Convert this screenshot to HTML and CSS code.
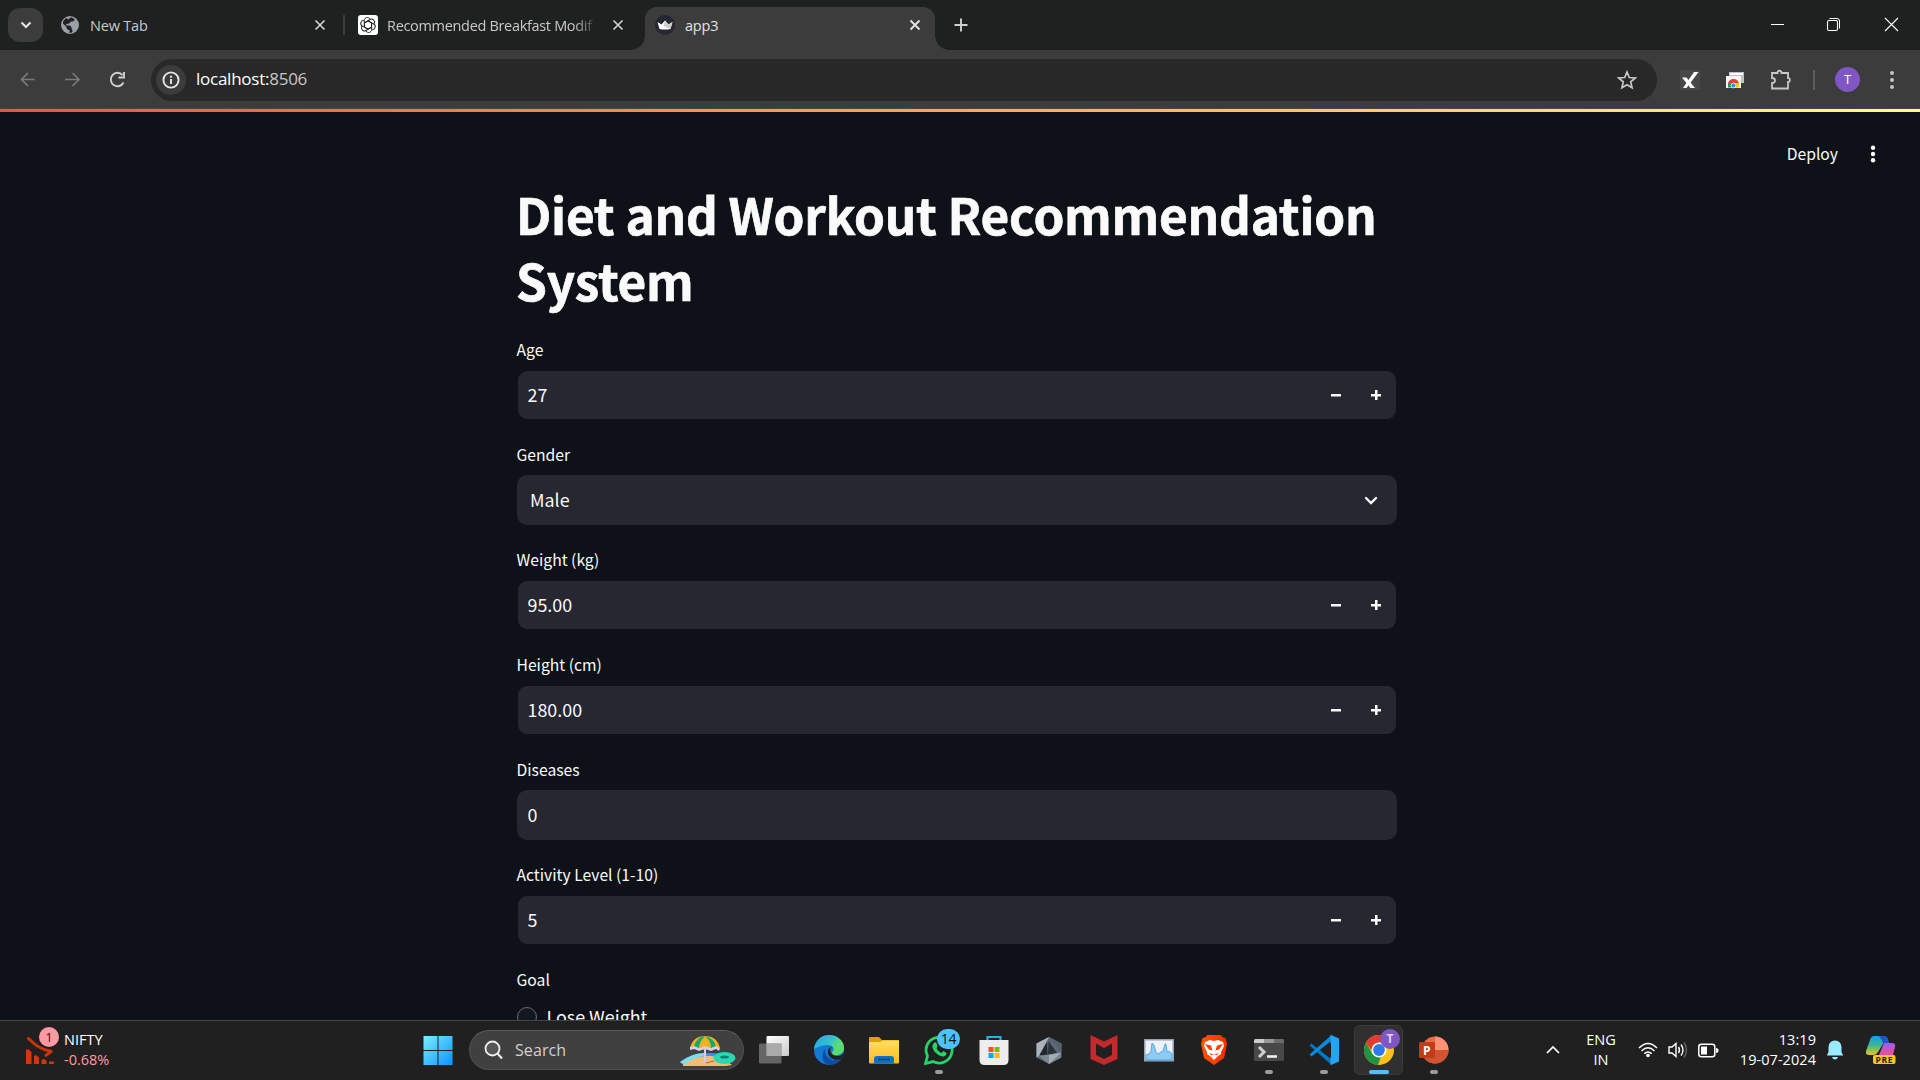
FILE: index.html
```html
<!DOCTYPE html>
<html lang="en">
<head>
<meta charset="utf-8">
<title>app3</title>
<link rel="stylesheet" href="styles.css">
</head>
<body>
<div class="screen">
  <header class="tabstrip">
    <span class="tab-search"><svg width="12" height="8" viewBox="0 0 12 8"><path d="M1.500 1.500 6 6l4.500-4.500" fill="none" stroke="#e8e8e8" stroke-width="2"/></svg></span>
    <div class="tab tab-first">
      <svg width="20" height="20" viewBox="0 0 20 20"><circle cx="10" cy="10" r="9" fill="#9aa0a6"/><path d="M10 2.500c2 0 3.500.5 4.500 2 0 1.500-1.500 2-3 2s-1 1.500-2.500 2-2.500 0-3 1 1.500 1 3 1 2.500 1 2.500 2.500 1 1.500 1 3-1.500 2-3 2v-3c-1.500 0-3-1-3-2.500s-2-2-3.500-4C3 5 5.500 3.500 7 3c0 2 3 1.500 3-.5z" fill="#202124"/></svg>
      <span class="tab-title">New Tab</span>
      <svg class="close" width="20" height="20" viewBox="0 0 20 20"><path d="m5.500 5.500 9 9m0-9-9 9" stroke="#d0d0d0" stroke-width="1.700"/></svg>
    </div>
    <span class="tab-divider"></span>
    <div class="tab tab-second">
      <svg width="20" height="20" viewBox="0 0 20 20"><rect width="20" height="20" rx="3" fill="#fff"/><g fill="none" stroke="#222" stroke-width="1"><g id="petal"><path d="M10 5.800 13.600 8v4.300"/><path d="M6.300 7.800V5.500c0-3.200 4.200-4 5.700-1.500"/></g><use href="#petal" transform="rotate(60 10 10)"/><use href="#petal" transform="rotate(120 10 10)"/><use href="#petal" transform="rotate(180 10 10)"/><use href="#petal" transform="rotate(240 10 10)"/><use href="#petal" transform="rotate(300 10 10)"/></g></svg>
      <span class="tab-title faded">Recommended Breakfast Modif</span>
      <svg class="close" width="20" height="20" viewBox="0 0 20 20"><path d="m5.500 5.500 9 9m0-9-9 9" stroke="#d0d0d0" stroke-width="1.700"/></svg>
    </div>
    <div class="tab tab-active">
      <svg width="20" height="20" viewBox="0 0 20 20"><circle cx="10" cy="10" r="10" fill="#262730"/><path d="m2.500 7 4 2.500L10 5.500l3.500 4 4-2.500-2 7q-5.500 1-11 0z" fill="#fff"/><path d="m10 5.500 3.500 4 4-2.500-2 7-7-3z" fill="#ccc"/></svg>
      <span class="tab-title">app3</span>
      <svg class="close" width="20" height="20" viewBox="0 0 20 20"><path d="m5.500 5.500 9 9m0-9-9 9" stroke="#e3e3e3" stroke-width="1.900"/></svg>
    </div>
    <svg class="newtab-plus" width="14" height="14" viewBox="0 0 14 14"><path d="M7 .5v13M.5 7h13" stroke="#d0d0d0" stroke-width="1.900"/></svg>
    <div class="window-buttons">
      <svg width="57" height="20" viewBox="0 0 57 20"><path d="M22 9.500h13" stroke="#fff"/></svg>
      <svg width="57" height="20" viewBox="0 0 57 20"><rect x="21.500" y="5.500" width="10" height="10" rx="1.500" fill="none" stroke="#fff" stroke-width="1.100"/><path d="M23.500 3.500H31q2.500 0 2.500 2.500v7.500" fill="none" stroke="#fff"/></svg>
      <svg width="57" height="20" viewBox="0 0 57 20"><path d="m22 3 13 13m0-13L22 16" stroke="#fff" stroke-width="1.100"/></svg>
    </div>
  </header>

  <div class="toolbar">
    <svg class="nav" width="44" height="20" viewBox="0 0 44 20"><path d="M28.500 9.500h-13m6.500-6.500-6.500 6.500L22 16" fill="none" stroke="#7a7a7a" stroke-width="1.700"/></svg>
    <svg class="nav" width="45" height="20" viewBox="0 0 45 20"><path d="M15 9.500h14M22.500 3 29 9.500 22.500 16" fill="none" stroke="#7a7a7a" stroke-width="1.700"/></svg>
    <svg class="nav reload" width="45" height="20" viewBox="0 0 45 20"><path d="M28.500 12.500A6.700 6.700 0 1 1 27.500 5m1.500-3v5.500h-5.500" fill="none" stroke="#d0d0d0" stroke-width="1.900"/></svg>
    <div class="omnibox">
      <span class="info"><svg width="18" height="18" viewBox="0 0 18 18"><circle cx="9" cy="9" r="7.600" fill="none" stroke="#e8e8e8" stroke-width="1.900"/><path d="M9 8v5M9 4.700v2" stroke="#e8e8e8" stroke-width="1.900"/></svg></span>
      <span class="url">localhost:<span class="port">8506</span></span>
      <svg class="star" width="20" height="20" viewBox="0 0 20 20"><path d="m10 2 2.300 5.500 6 .5-4.600 3.900 1.400 5.900L10 14.700l-5.100 3.100 1.400-5.900L1.700 8l6-.5z" fill="none" stroke="#c7c7c7" stroke-width="1.700"/></svg>
    </div>
    <div class="extensions">
      <svg width="20" height="20" viewBox="0 0 20 20"><rect width="20" height="20" fill="#484848"/><path d="M2 7.500h4.500L15 18h-4.500z" fill="#fff"/><path d="M3 18 14 2h4.500L6.500 18z" fill="#fff"/></svg>
      <svg class="ext-store" width="20" height="20" viewBox="0 0 20 20"><path d="M4 2h15v11H4z" fill="#bfc1c4"/><path d="M5 3h13v2H5z" fill="#fff"/><path d="M1 6h15v12H1z" fill="#f4f4f4"/><path d="M3 14a5.500 5 0 0 1 11 0l-2 2H6z" fill="#db4437"/><path d="M3 17.500V14l2.500-1 3 4.500z" fill="#0f9d58"/><path d="m9 17.500 1-4.500h4v4.500z" fill="#f4c20d"/><circle cx="8.500" cy="15.500" r="2.400" fill="#4285f4" stroke="#fff" stroke-width=".7"/></svg>
      <svg class="ext-puzzle" width="22" height="22" viewBox="0 0 22 22"><path d="M2 4h5.500c-.5-3 4.500-3 4 0H18v5c2.500-.5 2.500 4.500 0 4v6.500H2V14c4 0 4-5 0-5z" fill="none" stroke="#c7c7c7" stroke-width="1.800"/></svg>
      <span class="ext-divider"></span>
      <span class="avatar">T</span>
      <svg class="ext-menu" width="6" height="20" viewBox="0 0 6 20" fill="#c7c7c7"><circle cx="3" cy="3" r="2"/><circle cx="3" cy="10" r="2"/><circle cx="3" cy="17" r="2"/></svg>
    </div>
  </div>

  <div class="decoration"></div>
  <main class="app">
    <div class="app-header">
      <span class="deploy">Deploy</span>
      <svg width="6" height="18" viewBox="0 0 6 18" fill="#fafafa"><circle cx="3" cy="2.700" r="2.200"/><circle cx="3" cy="9" r="2.200"/><circle cx="3" cy="15.300" r="2.200"/></svg>
    </div>
    <div class="column">
      <h1 class="title">Diet and Workout Recommendation System</h1>
      <section class="field"><label class="label">Age</label>
        <div class="box number"><span class="value">27</span><i class="minus"></i><i class="plus"></i></div></section>
      <section class="field"><label class="label">Gender</label>
        <div class="box select"><span class="value">Male</span><svg width="14" height="9" viewBox="0 0 14 9"><path d="m2 2 5 5 5-5" fill="none" stroke="#fafafa" stroke-width="2.400" stroke-linecap="round"/></svg></div></section>
      <section class="field"><label class="label">Weight (kg)</label>
        <div class="box number"><span class="value">95.00</span><i class="minus"></i><i class="plus"></i></div></section>
      <section class="field"><label class="label">Height (cm)</label>
        <div class="box number"><span class="value">180.00</span><i class="minus"></i><i class="plus"></i></div></section>
      <section class="field"><label class="label">Diseases</label>
        <div class="box"><span class="value">0</span></div></section>
      <section class="field"><label class="label">Activity Level (1-10)</label>
        <div class="box number"><span class="value">5</span><i class="minus"></i><i class="plus"></i></div></section>
      <section class="field"><label class="label">Goal</label>
        <div class="radio"><span class="dot"></span><span class="radio-text">Lose Weight</span></div></section>
    </div>
  </main>

  <footer class="taskbar">
    <div class="widget">
      <div class="widget-icon">
        <svg width="30" height="30" viewBox="0 0 30 30"><path d="M1.500 2.500C8 9 13 14 26 16.500M26 16l-7 5" fill="none" stroke="#cb3406" stroke-width="3"/><path d="M0 29V15l2-1 3.500 3v12zM8 29v-8l2-1 3 2.500V29zM15.500 29v-4l2-1 3 1.500V29zM23 29v-2.500h5V29z" fill="#cf380d"/></svg>
        <span class="badge pink">1</span>
      </div>
      <div class="widget-text"><span>NIFTY</span><span class="down">-0.68%</span></div>
    </div>
    <div class="apps">
      <span class="task"><svg width="30" height="30" viewBox="0 0 30 30"><defs><linearGradient id="win" x1="0" y1="0" x2="30" y2="30" gradientUnits="userSpaceOnUse"><stop stop-color="#7df0ff"/><stop offset="1" stop-color="#0a92ff"/></linearGradient></defs><path d="M.5 1h14v14H.5zM15.500 1h14v14h-14zM.5 16h14v14H.5zM15.500 16h14v14h-14z" fill="url(#win)"/></svg></span>
      <div class="search">
        <svg width="20" height="20" viewBox="0 0 20 20"><circle cx="8.500" cy="8.500" r="7" fill="#565656" stroke="#eee" stroke-width="1.800"/><path d="m13.500 13.500 4.500 5" stroke="#eee" stroke-width="2"/></svg>
        <span class="search-text">Search</span>
        <svg class="beach" width="56" height="34" viewBox="0 0 56 34"><path d="M0 29Q12 20 30 20l16 1-10 3Q18 23 4 32z" fill="#3b93e8"/><path d="M3 31Q15 22 30 23q12 0 22 9L46 33H3z" fill="#f0bd78"/><path d="M0 29Q12 20 24 20l2 2Q14 24 4 32z" fill="#7fdcf0"/><path d="M25 3v26" stroke="#d8c8e8" stroke-width="2.200"/><path d="M10 15Q13 3 25 3q12 0 15 12l-4-1-5 1-6-1-6 1-5-1z" fill="#f2b01e"/><path d="M14 14Q16 4 25 3q-6 6-6 12zM31 15Q31 8 25 3q9 2 11 11z" fill="#10a96c"/><path d="m10 14 4-1 5 2 6-2 6 2 5-2 4 2-1 3-3-2-5 2-6-2-6 2-5-2-4 1z" fill="#d9cdeb"/><ellipse cx="44.500" cy="25" rx="11" ry="6" fill="#27d8b0"/><ellipse cx="44.500" cy="24" rx="4.500" ry="1.600" fill="#167f73"/><path d="M26 30 34 28" stroke="#a36b3b"/></svg>
      </div>
      <span class="task"><svg width="30" height="30" viewBox="0 0 30 30"><defs><linearGradient id="tv" x1="0" y1="0" x2="1" y2="1"><stop stop-color="#fff"/><stop offset="1" stop-color="#ccc"/></linearGradient></defs><rect x="7.500" y="1" width="22.500" height="20" rx="1" fill="url(#tv)"/><rect y="8.500" width="22.500" height="20" rx="1" fill="#777" fill-opacity=".8"/><path d="M7.500 8.500h15V21h-15z" fill="#aaa"/></svg></span>
      <span class="task"><svg width="30" height="30" viewBox="0 0 30 30"><defs><linearGradient id="ed" x1="0" y1="0" x2="1" y2=".5"><stop stop-color="#20a4e8"/><stop offset=".55" stop-color="#35c1d0"/><stop offset="1" stop-color="#6fe94a"/></linearGradient></defs><circle cx="15" cy="15" r="15" fill="#1279d4"/><path d="M0 14C1 6 7 0 15 0c9 0 15 6 15 13 0 4-3 7-7 7-5 0-6-2-4-4 2-3-1-6-5-6-6 0-10 2-14 4z" fill="url(#ed)"/><path d="M15 11c-6 2-5 11 3 14 4 1 7-.5 10-2-3 5-8 7-13 7C7 29 6 15 15 11z" fill="#0c4ea2"/><path d="M18 12c-4 2-1 9 5 9 3 0 5-1 7-4-1 4-2 5-3 7-5 2-12 0-13-6-.4-3 1-6 4-6z" fill="#202020"/><path d="M19.500 12c2 3-1 4 0 6 3 3 9 1 10-3V9z" fill="#57dc73"/></svg></span>
      <span class="task"><svg width="30" height="30" viewBox="0 0 30 30"><defs><linearGradient id="fo" x1="0" y1="0" x2="0" y2="1"><stop stop-color="#ffdf62"/><stop offset="1" stop-color="#ffb91e"/></linearGradient></defs><path d="M0 9V3q0-1 1-1h9l3 3h16q1 0 1 1v3z" fill="#dda008"/><path d="M0 7h11l3-1.500h16V27q0 1.500-1 1.500H1Q0 28.500 0 27z" fill="url(#fo)"/><path d="M5 28.500V24q0-3 3-3h14q3 0 3 3v4.500z" fill="#0b72c5"/><path d="M9 24.500h12" stroke="#08406f" stroke-width="1.500"/></svg></span>
      <span class="task"><svg width="30" height="30" viewBox="0 0 30 30"><path d="m1.500 28.500 2-7.500A13 13 0 1 1 9 26.600z" fill="none" stroke="#25d366" stroke-width="2.800"/><path d="M10 8c1-1 2-1 2.500 0l1 3c.3.800-1 2-1 2 1 2.500 3 4 5 5l1.500-1.500c.5-.6 3 1 3.500 1.500.5 1-1 3-3 3.500-3 .5-10-4-11-9C8 10.500 9 9 10 8z" fill="#25d366"/></svg><span class="badge blue">14</span><i class="running"></i></span>
      <span class="task"><svg width="30" height="30" viewBox="0 0 30 30"><path d="M8.500 7V2h13v5" fill="none" stroke="#23b4f0" stroke-width="2.200"/><path d="M.5 5h29v20q0 5-5 5h-19q-5 0-5-5z" fill="#ededed"/><path d="M9.500 12h5v5h-5z" fill="#f25022"/><path d="M15.500 12h5v5h-5z" fill="#7fba00"/><path d="M9.500 18h5v5h-5z" fill="#00a4ef"/><path d="M15.500 18h5v5h-5z" fill="#ffb900"/></svg></span>
      <span class="task"><svg width="28" height="30" viewBox="0 0 28 30"><path d="m14 2 12.500 6.500v14L14 29 1.500 22.500v-14z" fill="#5c6874"/><path d="M14 2 1.500 8.500v14L4 21z" fill="#aab4be"/><path d="m14 2 12.500 6.500v10z" fill="#56626e"/><path d="M12 7 4.500 20l8 .5z" fill="#23272b"/><path d="m13.500 6 8.500 12-9 2z" fill="#2c3238"/><path d="m4 21 22-3.500v5L14 29z" fill="#7d8893"/><path d="m14 20 12-2.500L14 29z" fill="#a3adb7"/></svg></span>
      <span class="task"><svg width="28" height="30" viewBox="0 0 28 30"><path d="m.5 0 13.500 6.500L27.500 0v24L14 30 .5 24zM6 8.500V20l8 4 8-4V8.500L14 13z" fill="#c4292c" fill-rule="evenodd"/></svg></span>
      <span class="task"><svg width="30" height="30" viewBox="0 0 30 30"><rect x=".75" y="4.750" width="28.500" height="21" fill="#eef1f5" stroke="#93a3b4" stroke-width="1.500"/><path d="m2 20 3-1 2-3 1-8 2 2 2 7 2 2 3-2 2-1 2-7h1l1 8 2-1 3 3v6H2z" fill="#8bcbf5" stroke="#3f9cdf" stroke-width=".8"/></svg></span>
      <span class="task"><svg width="26" height="30" viewBox="0 0 26 30"><defs><linearGradient id="br"><stop stop-color="#ff5601"/><stop offset="1" stop-color="#ff2800"/></linearGradient></defs><path d="M6.500 0h13L22 2.500l2.500.5 1.500 6-3 14-10 7-10-7L0 9l1.500-6L4 2.500z" fill="url(#br)"/><path d="m4 7 5-2 4 1 4-1 5 2 1 4-3 6v2l-3 2-4 4-4-4-3-2v-2l-3-6z" fill="#fff"/><path d="m4 9 6 1.500 1.500 5-3.500-1zM22 9l-6 1.500-1.500 5 3.500-1zM8 18l5 1.500 5-1.500-2 2-3-.5-3 .5z" fill="#ff3b05"/></svg></span>
      <span class="task"><svg width="30" height="30" viewBox="0 0 30 30"><rect y="4" width="30" height="22" rx="1.500" fill="#484848"/><path d="M0 8V5.500Q0 4 1.500 4H10v4z" fill="#ccc"/><path d="M10 4h10v4H10z" fill="#999"/><path d="M20 4h8.500Q30 4 30 5.500V8H20z" fill="#6c6c6c"/><path d="m5 12 5 5-5 5" fill="none" stroke="#d0d0d0" stroke-width="3"/><path d="M13 21.500h10" stroke="#eee" stroke-width="2.600"/></svg><i class="running"></i></span>
      <span class="task"><svg width="30" height="30" viewBox="0 0 30 30"><path d="m.5 10.500 2-2 20 16V30z" fill="#0076c6"/><path d="m.5 19.500 2 2 20-16V0z" fill="#0b8bdc"/><path d="m22 0 8 3.500v23L22 30l-.5-.5V.5z" fill="#26a3f2"/><path d="M22 8v14l-9-7z" fill="#202020"/></svg><i class="running"></i></span>
      <span class="task current"><svg width="30" height="30" viewBox="0 0 30 30"><circle cx="15" cy="15" r="15" fill="#fbc116"/><path d="M2 7.500a15 15 0 0 1 26 0H15l-5 12z" fill="#e33b2e"/><path d="M2 7.500 8.500 19l9 1-3.500 10A15 15 0 0 1 2 7.500z" fill="#229342"/><circle cx="15" cy="15" r="7.500" fill="#fff"/><circle cx="15" cy="15" r="5.900" fill="#2f79e8"/></svg><span class="badge purple">T</span><i class="running active"></i></span>
      <span class="task"><svg width="30" height="30" viewBox="0 0 30 30"><circle cx="16" cy="15" r="13.500" fill="#ec6a46"/><path d="M16 1.500A13.500 13.500 0 0 1 29.500 15H16z" fill="#ff9274"/><path d="M2.500 15h27a13.500 13.500 0 0 1-27 0z" fill="#d35230"/><rect y="7" width="16" height="16" rx="1.500" fill="#c13b1b"/><text x="4" y="19.500" fill="#fff" font-family="Open Sans, sans-serif" font-weight="700" font-size="12">P</text></svg><i class="running"></i></span>
    </div>
    <div class="tray">
      <svg class="chevron" width="16" height="10" viewBox="0 0 16 10"><path d="m2 8 6-6 6 6" fill="none" stroke="#fff" stroke-width="1.700"/></svg>
      <div class="stack language"><span>ENG</span><span>IN</span></div>
      <svg class="wifi" width="20" height="16" viewBox="0 0 20 16"><g fill="none" stroke="#fff" stroke-width="1.500"><path d="M1 6q9-9 18 0M3.500 9q6.500-6.500 13 0M6.300 11.700q3.700-3.500 7.400 0"/></g><circle cx="10" cy="13.500" r="1.800" fill="#fff"/></svg>
      <svg class="speaker" width="20" height="18" viewBox="0 0 20 18"><path d="M1 6v6h3l4 3.500v-13L4 6z" fill="none" stroke="#fff" stroke-width="1.400"/><path d="M10.500 6q2 3 0 6M13 3.500q4 5.500 0 11" fill="none" stroke="#fff" stroke-width="1.400"/><path d="M16 1.500q5 7.500 0 15" fill="none" stroke="#666" stroke-width="1.400"/></svg>
      <svg class="battery" width="21" height="15" viewBox="0 0 21 15"><rect x=".8" y="1.300" width="16" height="12.400" rx="2.500" fill="none" stroke="#fff" stroke-width="1.500"/><rect x="3" y="3.500" width="6" height="8" fill="#fff"/><path d="M18 5q2.500 0 2.500 2.500T18 10z" fill="#fff"/></svg>
      <div class="stack clock"><span>13:19</span><span>19-07-2024</span></div>
      <svg class="bell" width="18" height="20" viewBox="0 0 18 20"><path d="M9 .5q6 0 6.500 6.500v5l1.700 3.500H.8L2.500 12V7Q3 .5 9 .5zM6 17h6q-1 2.500-3 2.500T6 17z" fill="#99ebff"/></svg>
      <svg class="copilot" width="30" height="28" viewBox="0 0 30 28"><defs><linearGradient id="cp" x1="0" y1="0" x2="0" y2="1"><stop stop-color="#169ce8"/><stop offset=".5" stop-color="#3db78f"/><stop offset="1" stop-color="#e8c819"/></linearGradient><linearGradient id="cq" x1="0" y1="0" x2="0" y2="1"><stop stop-color="#9c5cf5"/><stop offset="1" stop-color="#ee4c9a"/></linearGradient></defs><path d="M8 0h10q3 0 4 4l1 4h-6l-5 8q-2 3-4 3H3q-4 0-3-4L4 4q1-4 4-4z" fill="url(#cp)"/><path d="M12 0h6q3 0 4 4l1 4h-6q-1-6-5-8z" fill="#1c55d2"/><path d="M18 7h8q4 0 3 4l-2 8H13z" fill="url(#cq)"/><rect x="7" y="19" width="22.500" height="9" rx="2" fill="#ffc71e"/><text x="9.500" y="26.500" font-family="Open Sans, sans-serif" font-weight="700" font-size="8.500" letter-spacing=".6" fill="#222">PRE</text></svg>
    </div>
  </footer>
</div>
</body>
</html>
```
FILE: styles.css
```css
* { box-sizing: border-box; }
body { margin: 0; background: #0e1117; }
svg { display: block; flex: none; }
.screen {
  width: 1920px; height: 1080px; overflow: hidden;
  display: flex; flex-direction: column;
  font-family: "Open Sans", "Noto Sans", sans-serif;
}

/* tab strip */
.tabstrip { height: 50px; flex: none; background: #1f2020; display: flex; align-items: center; padding-left: 8px; }
.tab-search { width: 35px; height: 34px; border-radius: 12px; background: #3c3c3c; display: flex; align-items: center; justify-content: center; }
.tab { display: flex; align-items: center; gap: 10px; height: 50px; color: #c9c9c9; font-size: 14.500px; }
.tab-title { flex: 1; min-width: 0; white-space: nowrap; letter-spacing: -0.200px; }
.tab-first { width: 300px; padding: 0 13px 0 17px; }
.tab-divider { width: 2px; height: 20px; background: #3c3c3c; }
.tab-second { width: 300px; padding: 0 17px 0 13px; gap: 9px; }
.faded { letter-spacing: -0.320px; -webkit-mask-image: linear-gradient(90deg, #000 88%, transparent); mask-image: linear-gradient(90deg, #000 88%, transparent); }
.tab-active {
  position: relative; width: 290px; height: 43px; align-self: flex-end; padding: 0 10px 7px;
  background: #3c3c3c; border-radius: 12px 12px 0 0; color: #e3e3e3;
}
.tab-active::before, .tab-active::after { content: ""; position: absolute; bottom: 0; width: 14px; height: 14px; }
.tab-active::before { right: 100%; background: radial-gradient(circle at 0 0, transparent 13.500px, #3c3c3c 14px); }
.tab-active::after { left: 100%; background: radial-gradient(circle at 100% 0, transparent 13.500px, #3c3c3c 14px); }
.newtab-plus { margin-left: 19px; }
.window-buttons { margin-left: auto; display: flex; }

/* toolbar */
.toolbar {
  height: 59px; flex: none; display: flex; align-items: center; padding-left: 6px;
  background: #3c3c3c; box-shadow: inset 0 -1px #474747;
}
.reload { margin-right: 11px; }
.omnibox { width: 1506px; height: 42px; border-radius: 21px; background: #282828; display: flex; align-items: center; padding: 0 20px 0 5px; }
.info { width: 30px; height: 30px; border-radius: 50%; background: #3c3c3c; display: flex; align-items: center; justify-content: center; }
.url { flex: 1; padding: 0 0 2px 10px; color: #fff; font-size: 17px; letter-spacing: -0.250px; }
.port { color: #c7c7c7; }
.extensions { flex: 1; display: flex; align-items: center; padding-left: 23px; }
.ext-store { margin-left: 25px; }
.ext-puzzle { margin-left: 25px; }
.ext-divider { width: 2px; height: 20px; margin-left: 21px; background: #5c5c5c; }
.avatar { width: 25px; height: 25px; margin-left: 20px; border-radius: 50%; background: #7e57c2; color: #fff; font-size: 13px; line-height: 25px; text-align: center; }
.ext-menu { margin-left: 29px; }

/* app */
.decoration { height: 3px; flex: none; background: linear-gradient(90deg, #ff4b4b, #fffd80); }
.app { flex: 1; min-height: 0; overflow: hidden; background: #0e1117; color: #fafafa; font-family: "Noto Sans CJK SC", "Noto Sans", sans-serif; }
.app-header { height: 69px; padding: 15px 44px 0 0; display: flex; justify-content: flex-end; align-items: center; gap: 32px; }
.deploy { font-size: 15.700px; line-height: 24px; }
.column { width: 880px; margin-left: 517px; }
.title { margin: 0 0 22px -1px; font-size: 49.500px; line-height: 66px; font-weight: 700; letter-spacing: -0.240px; -webkit-text-stroke: 0.700px #fafafa; }
.field { margin-bottom: 20px; }
.label { display: block; height: 30px; margin: 0 0 5px -0.500px; line-height: 30px; font-size: 15.700px; }
.box { height: 50px; display: flex; align-items: center; background: #262730; border-radius: 10px; padding: 0 20px 0 10.500px; }
.value { flex: 1; font-size: 17.900px; line-height: 28px; padding-bottom: 2px; }
.number { background-clip: padding-box; border: 1px solid transparent; padding: 0 15px 0 9.500px; gap: 30px; }
.select { padding: 0 19px 0 13px; }
.minus, .plus { width: 10px; height: 10px; background: linear-gradient(#fafafa, #fafafa) center / 10px 2.500px no-repeat; }
.plus { background: linear-gradient(#fafafa, #fafafa) center / 10px 2.500px no-repeat, linear-gradient(#fafafa, #fafafa) center / 2.500px 10px no-repeat; }
.radio { display: flex; align-items: center; gap: 10px; height: 34px; font-size: 17.900px; }
.radio-text { padding-bottom: 2px; margin-left: -0.500px; }
.dot { width: 20px; height: 20px; border-radius: 50%; border: 1px solid #6b6c70; background: #131720; }

/* taskbar */
.taskbar { height: 60px; flex: none; background: #202020; border-top: 1px solid #454545; padding-bottom: 1px; display: flex; align-items: center; color: #fff; font-size: 14.500px; }
.widget { width: 410px; padding-left: 26px; display: flex; align-items: center; gap: 10px; }
.widget-icon { position: relative; width: 28px; height: 30px; }
.widget-text { display: flex; flex-direction: column; line-height: 20px; padding-bottom: 1px; }
.down { color: #ff99a4; }
.badge { position: absolute; border-radius: 50%; text-align: center; width: 20px; height: 20px; line-height: 20px; font-size: 13px; }
.pink { left: 13px; top: -8px; background: #ff99a4; color: #222; }
.apps { display: flex; align-items: center; }
.task { position: relative; width: 55px; height: 50px; display: flex; align-items: center; justify-content: center; }
.current::before { content: ""; position: absolute; inset: 0 3px; border-radius: 6px; background: #303030; border: 1px solid #3a3a3a; }
.current svg { position: relative; }
.blue { left: 26px; top: 4px; width: 23px; background: #4cc2ff; color: #111; font-size: 14px; letter-spacing: -0.300px; border-radius: 10px; }
.purple { left: 29px; top: 4px; background: #7e57c2; color: #e0d4f0; font-weight: 700; font-size: 12px; }
.running { position: absolute; left: 23.500px; bottom: 1px; width: 8px; height: 4px; border-radius: 2px; background: #9a9a9a; }
.active { left: 18px; width: 20px; background: #4cc2ff; }
.search { width: 275px; height: 40px; margin: 0 2px 0 4px; border-radius: 20px; background: #404040; border: 1px solid #505050; border-top-color: #5c5c5c; display: flex; align-items: center; padding: 0 7px 0 14px; }
.search-text { flex: 1; padding-left: 11px; font-size: 16px; letter-spacing: 0.100px; color: #d2d2d2; }
.tray { margin-left: auto; display: flex; align-items: center; padding-right: 24px; }
.stack { display: flex; flex-direction: column; line-height: 20px; padding-bottom: 1px; }
.language { align-items: center; width: 40px; margin: 0 17px 0 20px; }
.wifi { margin-right: 10px; }
.speaker { margin-right: 10px; }
.clock { align-items: flex-end; width: 90px; margin: 0 10px 0 7px; letter-spacing: 0.050px; }
.copilot { margin-left: 22px; }
```
